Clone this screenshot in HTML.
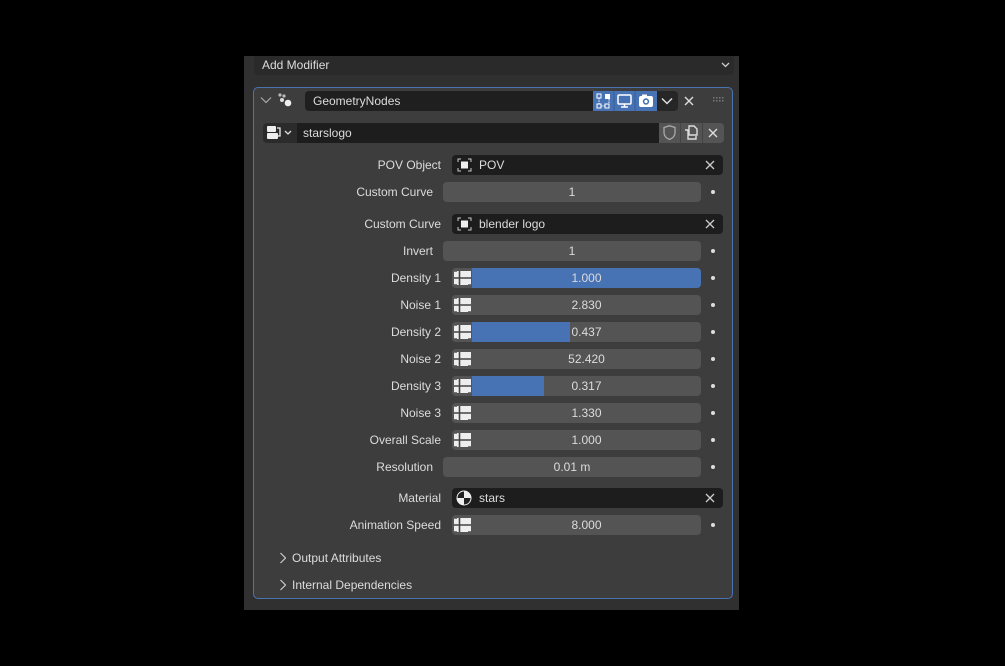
<!DOCTYPE html>
<html><head><meta charset="utf-8"><style>
*{margin:0;padding:0;box-sizing:border-box}
body{width:1005px;height:666px;background:#000;position:relative;overflow:hidden;font-family:"Liberation Sans","DejaVu Sans",sans-serif;font-size:12px;color:#dcdcdc}
.a{position:absolute}
.panel{left:244px;top:56px;width:495px;height:554px;background:#303030}
.box{left:253px;top:87px;width:480px;height:512px;background:#3d3d3d;border:1px solid #4a74b0;border-radius:5px}
.lbl{position:absolute;text-align:right;width:200px;line-height:20px}
.fld{position:absolute;left:443px;width:258px;height:20px;background:#545454;border-radius:4px;text-align:center;line-height:20px}
.ifld{position:absolute;left:452px;width:249px;height:20px;background:#545454;border-radius:4px;overflow:hidden}
.ifld .ic{position:absolute;left:0;top:0;width:20px;height:20px;background:#545454}
.ifld .bar{position:absolute;left:20px;top:0;height:20px;background:#4772b3}
.ifld .v{position:absolute;left:20px;right:0;text-align:center;line-height:20px}
.dot{position:absolute;left:711px;width:4px;height:4px;border-radius:2px;background:#ddd}
.obj{position:absolute;left:452px;width:271px;height:20px;background:#1d1d1d;border-radius:4px;line-height:20px}
.obj span{position:absolute;left:27px}
.obj .x{position:absolute;left:252px;top:0;color:#ccc;font-size:14px}
</style></head><body>
<div class="a panel"></div>
<div class="a" style="left:254px;top:56px;width:480px;height:19px;background:#2a2a2a;border-radius:0 0 4px 4px"></div>
<div class="a" style="left:262px;top:58px;line-height:15px;font-size:12px">Add Modifier</div>
<svg class="a" style="left:721px;top:61px" width="9" height="7"><path d="M1 2l3.5 3.5L8 2" stroke="#ccc" stroke-width="1.3" fill="none"/></svg>
<div class="a box"></div>
<svg class="a" style="left:260px;top:96px" width="12" height="8"><path d="M1 1.5l5 5 5-5" stroke="#aaa" stroke-width="1.2" fill="none"/></svg>
<svg class="a" style="left:277px;top:92px" width="18" height="17"><circle cx="3" cy="3" r="1.6" fill="#bbb"/><circle cx="7" cy="4" r="1.6" fill="#bbb"/><circle cx="5" cy="8" r="2" fill="#ddd"/><circle cx="11" cy="11" r="3.3" fill="#eee"/></svg>
<div class="a" style="left:305px;top:91px;width:288px;height:20px;background:#1f1f1f;border-radius:4px 0 0 4px;line-height:20px;padding-left:8px">GeometryNodes</div>
<div class="a" style="left:593px;top:91px;width:64px;height:20px;background:#4772b3;border-radius:0"></div>
<svg class="a" style="left:593px;top:91px" width="64" height="20">
<rect x="4" y="3" width="4" height="4" fill="none" stroke="#fff"/><rect x="12" y="3" width="5" height="5" fill="#fff"/><rect x="4" y="13" width="4" height="4" fill="none" stroke="#fff"/><rect x="12" y="13" width="4" height="4" fill="none" stroke="#fff"/><path d="M6 7v6M8 15h4M16 8v5" stroke="#fff" stroke-dasharray="1.5 1"/>
<line x1="21" y1="0" x2="21" y2="20" stroke="#3a5f96"/><line x1="42" y1="0" x2="42" y2="20" stroke="#3a5f96"/>
<rect x="25" y="4" width="13" height="9" rx="1" fill="none" stroke="#fff" stroke-width="1.5"/><path d="M28 16h7M31.5 13v3" stroke="#fff" stroke-width="1.5"/>
<rect x="46" y="5" width="14" height="11" rx="2" fill="#fff"/><rect x="49" y="3.5" width="5" height="3" fill="#fff"/><circle cx="53" cy="10.5" r="3.2" fill="#4772b3"/><circle cx="53" cy="10.5" r="1.6" fill="#fff"/></svg>
<div class="a" style="left:657px;top:91px;width:21px;height:20px;background:#262626;border-radius:0 4px 4px 0"></div>
<svg class="a" style="left:661px;top:97px" width="12" height="8"><path d="M1 1.5l5 5 5-5" stroke="#ddd" stroke-width="1.5" fill="none"/></svg>
<svg class="a" style="left:684px;top:96px" width="10" height="10"><path d="M1 1l8 8M9 1l-8 8" stroke="#ddd" stroke-width="1.4"/></svg>
<svg class="a" style="left:713px;top:97px" width="13" height="6"><g fill="#777"><rect x="0" y="0" width="1.5" height="1.5"/><rect x="3" y="0" width="1.5" height="1.5"/><rect x="6" y="0" width="1.5" height="1.5"/><rect x="9" y="0" width="1.5" height="1.5"/><rect x="0" y="3" width="1.5" height="1.5"/><rect x="3" y="3" width="1.5" height="1.5"/><rect x="6" y="3" width="1.5" height="1.5"/><rect x="9" y="3" width="1.5" height="1.5"/></g></svg>

<div class="a" style="left:263px;top:123px;width:34px;height:20px;background:#2b2b2b;border-radius:4px 0 0 4px"></div>
<svg class="a" style="left:266px;top:125px" width="30" height="16"><rect x="1" y="1" width="9" height="6" rx="1" fill="#eee"/><rect x="1" y="8" width="11" height="6" rx="1" fill="#eee"/><path d="M11 3h3v8h-2" stroke="#eee" fill="none" stroke-width="1.3"/><path d="M19 6l3 3 3-3" stroke="#ddd" stroke-width="1.3" fill="none"/></svg>
<div class="a" style="left:297px;top:123px;width:362px;height:20px;background:#1d1d1d;line-height:20px;padding-left:6px">starslogo</div>
<div class="a" style="left:659px;top:123px;width:65px;height:20px;background:#545454;border-radius:0 4px 4px 0"></div>
<svg class="a" style="left:659px;top:123px" width="65" height="20"><path d="M5 4.5l5.5-1.8 5.5 1.8v5c0 4-3 6-5.5 7-2.5-1-5.5-3-5.5-7z" fill="none" stroke="#aaa" stroke-width="1.3"/><line x1="21.5" y1="0" x2="21.5" y2="20" stroke="#444"/><line x1="43.5" y1="0" x2="43.5" y2="20" stroke="#444"/><path d="M26 7h3v9h8v-3" fill="none" stroke="#ddd" stroke-width="1.4"/><path d="M30 3h5l3 3v6h-8z" fill="none" stroke="#ddd" stroke-width="1.4"/><path d="M50 6l8 8M58 6l-8 8" stroke="#ddd" stroke-width="1.4"/></svg>

<svg width="0" height="0" style="position:absolute"><defs><g id="tx"><rect x="2" y="3" width="17" height="14" fill="#eee"/><path d="M7.5 3v14M2 10h17" stroke="#444" stroke-width="1.6"/><path d="M2 3h3M2 17h3M16 17h3" stroke="#545454" stroke-width="1.5"/></g></defs></svg>

<div class="lbl" style="left:241px;top:155px">POV Object</div>
<div class="obj" style="top:155px"><svg class="a" style="left:5px;top:3px" width="15" height="14"><path d="M1 4V1h3M11 1h3v3M14 10v3h-3M4 13H1v-3" stroke="#ccc" fill="none"/><rect x="4" y="3.5" width="7" height="7" fill="#eee"/></svg><span>POV</span><svg class="x" style="left:253px;top:5px" width="10" height="10"><path d="M1 1l8 8M9 1l-8 8" stroke="#ccc" stroke-width="1.3"/></svg></div>

<div class="lbl" style="left:233px;top:182px">Custom Curve</div>
<div class="fld" style="top:182px">1</div><div class="dot" style="top:190px"></div>

<div class="lbl" style="left:241px;top:214px">Custom Curve</div>
<div class="obj" style="top:214px"><svg class="a" style="left:5px;top:3px" width="15" height="14"><path d="M1 4V1h3M11 1h3v3M14 10v3h-3M4 13H1v-3" stroke="#ccc" fill="none"/><rect x="4" y="3.5" width="7" height="7" fill="#eee"/></svg><span>blender logo</span><svg class="x" style="left:253px;top:5px" width="10" height="10"><path d="M1 1l8 8M9 1l-8 8" stroke="#ccc" stroke-width="1.3"/></svg></div>

<div class="lbl" style="left:233px;top:241px">Invert</div>
<div class="fld" style="top:241px">1</div><div class="dot" style="top:249px"></div>

<div class="lbl" style="left:241px;top:268px">Density 1</div>
<div class="ifld" style="top:268px"><div class="ic"><svg width="20" height="20"><use href="#tx"/></svg></div><div class="bar" style="width:229px"></div><div class="v">1.000</div></div><div class="dot" style="top:276px"></div>

<div class="lbl" style="left:241px;top:295px">Noise 1</div>
<div class="ifld" style="top:295px"><div class="ic"><svg width="20" height="20"><use href="#tx"/></svg></div><div class="v">2.830</div></div><div class="dot" style="top:303px"></div>

<div class="lbl" style="left:241px;top:322px">Density 2</div>
<div class="ifld" style="top:322px"><div class="ic"><svg width="20" height="20"><use href="#tx"/></svg></div><div class="bar" style="width:98px"></div><div class="v">0.437</div></div><div class="dot" style="top:330px"></div>

<div class="lbl" style="left:241px;top:349px">Noise 2</div>
<div class="ifld" style="top:349px"><div class="ic"><svg width="20" height="20"><use href="#tx"/></svg></div><div class="v">52.420</div></div><div class="dot" style="top:357px"></div>

<div class="lbl" style="left:241px;top:376px">Density 3</div>
<div class="ifld" style="top:376px"><div class="ic"><svg width="20" height="20"><use href="#tx"/></svg></div><div class="bar" style="width:72px"></div><div class="v">0.317</div></div><div class="dot" style="top:384px"></div>

<div class="lbl" style="left:241px;top:403px">Noise 3</div>
<div class="ifld" style="top:403px"><div class="ic"><svg width="20" height="20"><use href="#tx"/></svg></div><div class="v">1.330</div></div><div class="dot" style="top:411px"></div>

<div class="lbl" style="left:241px;top:430px">Overall Scale</div>
<div class="ifld" style="top:430px"><div class="ic"><svg width="20" height="20"><use href="#tx"/></svg></div><div class="v">1.000</div></div><div class="dot" style="top:438px"></div>

<div class="lbl" style="left:233px;top:457px">Resolution</div>
<div class="fld" style="top:457px">0.01 m</div><div class="dot" style="top:465px"></div>

<div class="lbl" style="left:241px;top:488px">Material</div>
<div class="obj" style="top:488px"><svg class="a" style="left:4px;top:2px" width="16" height="16"><circle cx="8" cy="8" r="7" fill="#eee"/><path d="M8 1a7 7 0 0 0-7 7h7z" fill="#222"/><path d="M8 8h7a7 7 0 0 1-7 7z" fill="#222"/><circle cx="8" cy="8" r="7" fill="none" stroke="#eee" stroke-width="1"/></svg><span>stars</span><svg class="x" style="left:253px;top:5px" width="10" height="10"><path d="M1 1l8 8M9 1l-8 8" stroke="#ccc" stroke-width="1.3"/></svg></div>

<div class="lbl" style="left:241px;top:515px">Animation Speed</div>
<div class="ifld" style="top:515px"><div class="ic"><svg width="20" height="20"><use href="#tx"/></svg></div><div class="v">8.000</div></div><div class="dot" style="top:523px"></div>

<svg class="a" style="left:279px;top:552px" width="7" height="12"><path d="M1.5 1l5 5-5 5" stroke="#ccc" stroke-width="1.2" fill="none"/></svg>
<div class="a" style="left:292px;top:550px;line-height:17px">Output Attributes</div>
<svg class="a" style="left:279px;top:579px" width="7" height="12"><path d="M1.5 1l5 5-5 5" stroke="#ccc" stroke-width="1.2" fill="none"/></svg>
<div class="a" style="left:292px;top:577px;line-height:17px">Internal Dependencies</div>
</body></html>
